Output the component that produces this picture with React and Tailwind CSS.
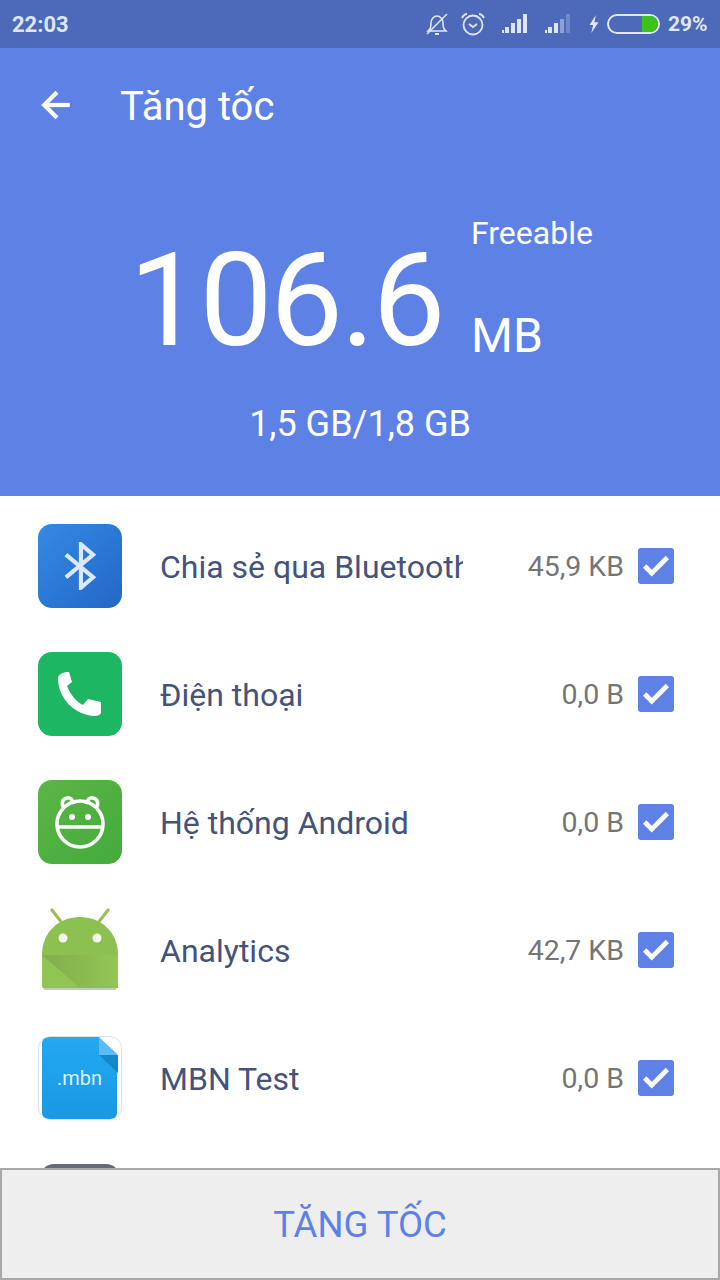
import React from 'react';
import { Check, ArrowLeft } from 'lucide-react';

function SignalIcon({ dim }) {
  const heights = [3, 6, 10, 14, 19];
  return (
    <svg width="30" height="20" viewBox="0 0 30 20">
      {heights.map((h, i) => (
        <rect
          key={i}
          x={i * 6 + (i === 0 ? 3 : 0)}
          y={20 - h}
          width={i === 0 ? 2 : 4}
          height={h}
          fill="#dfe6f7"
          opacity={dim && i >= 3 ? (i === 3 ? 0.45 : 0.25) : 1}
        />
      ))}
    </svg>
  );
}

function StatusBar() {
  return (
    <div className="h-12 bg-[#4d69b9] flex items-center pl-3 pr-3 text-[#dfe6f7] font-bold text-[22px]">
      <span>22:03</span>
      <div className="ml-auto flex items-center">
        <svg width="24" height="26" viewBox="0 0 24 26" fill="none" stroke="#dfe6f7" strokeWidth="1.6">
          <path d="M3 20c2-2 3-3 3-8 0-4 3-7 6-7s6 3 6 7c0 5 1 6 3 8z" />
          <path d="M10 23h4" strokeWidth="2" />
          <path d="M2 23L22 3" />
        </svg>
        <svg className="ml-[11px]" width="26" height="26" viewBox="0 0 26 26" fill="none" stroke="#dfe6f7" strokeWidth="1.8">
          <circle cx="13" cy="14" r="9.5" />
          <path d="M9 13l4 3 4-3" />
          <path d="M2 7c1-2 3-4 5-4M24 7c-1-2-3-4-5-4" strokeWidth="2" />
        </svg>
        <div className="ml-[13px] mt-[-3px]"><SignalIcon /></div>
        <div className="ml-[13px] mt-[-3px]"><SignalIcon dim /></div>
        <svg className="ml-[16px]" width="12" height="18" viewBox="0 0 12 20" fill="#dfe6f7">
          <path d="M8 0L1 11h4l-2 9 8-12H6.500z" />
        </svg>
        <div className="ml-[7px] w-[53px] h-[20px] rounded-full border-2 border-[#dfe6f7] flex justify-end items-center">
          <div className="w-[16px] h-[16px] bg-[#3cc21a] rounded-r-full"></div>
        </div>
        <span className="ml-[8px] mt-[2px] text-[21px] w-[40px] whitespace-nowrap">29%</span>
      </div>
    </div>
  );
}

function Hero() {
  return (
    <div className="h-[448px] bg-[#5e81e6] text-white">
      <div className="flex items-center h-[114px]">
        <ArrowLeft className="ml-[35px]" size={44} strokeWidth={2.300} strokeLinecap="butt" strokeLinejoin="miter" />
        <h1 className="ml-[41px] text-[40px] leading-none mt-[4px]">Tăng tốc</h1>
      </div>
      <div className="flex items-start pl-[129px] mt-[55px]">
        <div className="text-[130px] tracking-[-2.5px] leading-none mt-[19px]">106.6</div>
        <div className="ml-[28px] flex flex-col">
          <span className="text-[32px] leading-none whitespace-nowrap">Freeable</span>
          <span className="text-[48px] leading-none mt-[63px]">MB</span>
        </div>
      </div>
      <div className="text-center text-[36px] leading-none mt-[40px]">1,5 GB/1,8 GB</div>
    </div>
  );
}

function BluetoothIcon() {
  return (
    <div className="w-[84px] h-[84px] rounded-[14px] bg-gradient-to-br from-[#348ae4] to-[#2466c6] flex items-center justify-center">
      <svg width="32" height="48" viewBox="0 0 34 50" fill="none" stroke="#dbe9fa" strokeWidth="4.400">
        <path d="M2 13l29 24-13 11V2l13 11L2 37" />
      </svg>
    </div>
  );
}

function PhoneIcon() {
  return (
    <div className="w-[84px] h-[84px] rounded-[14px] bg-[#1db763] flex items-center justify-center">
      <svg className="mr-[3px]" width="44" height="44" viewBox="0 0 44 44" fill="white">
        <path d="M9 0c-4 1-8 3-8 6 0 20 16 37 37 38 3 0 5-1 6-3V30l-13-3-5 6C20 30 14 24 10 14l5-4L12 0z" />
      </svg>
    </div>
  );
}

function SystemIcon() {
  return (
    <div className="w-[84px] h-[84px] rounded-[14px] bg-gradient-to-br from-[#5cb545] to-[#42ab3c] flex items-center justify-center">
      <svg width="52" height="54" viewBox="0 0 52 54" fill="none" stroke="white" strokeWidth="3.600">
        <circle cx="26" cy="29" r="23" />
        <path d="M3 32h46" />
        <path d="M10 13c-3-4-2-9 3-10 3-1 6 2 7 6M42 13c3-4 2-9-3-10-3-1-6 2-7 6" />
        <circle cx="18" cy="22" r="3" fill="white" stroke="none" />
        <circle cx="34" cy="22" r="3" fill="white" stroke="none" />
      </svg>
    </div>
  );
}

function AndroidIcon() {
  return (
    <div className="w-[84px] h-[84px] flex items-center justify-center">
      <svg width="84" height="84" viewBox="0 0 84 84">
        <defs>
          <linearGradient id="fold" x1="0" y1="0" x2="1" y2="0">
            <stop offset="0" stopColor="#81ad4b" />
            <stop offset="1" stopColor="#93c655" />
          </linearGradient>
        </defs>
        <path d="M24 15L14 2M60 15L70 2" stroke="#9ac05a" strokeWidth="3.200" strokeLinecap="round" />
        <path d="M4 47C4 24 21 9 42 9s38 15 38 38z" fill="#8cc152" />
        <path d="M4 47h76v30a4 4 0 0 1-4 4H8a4 4 0 0 1-4-4z" fill="#90c453" />
        <path d="M4 47h76v33H42z" fill="url(#fold)" />
        <path d="M6 81h72" stroke="#c3cfb2" strokeWidth="2" />
        <circle cx="25" cy="30" r="4.500" fill="#f3f7ea" />
        <circle cx="59" cy="30" r="4.500" fill="#f3f7ea" />
      </svg>
    </div>
  );
}

function MbnIcon() {
  return (
    <div className="relative w-[84px] h-[84px] rounded-[12px] border border-[#d8e4ec] bg-white overflow-hidden">
      <div className="absolute left-[3px] right-[4px] top-0 bottom-0 bg-gradient-to-b from-[#23a8f2] to-[#1a98e2] rounded-[6px] flex items-center justify-center">
        <span className="text-[#dcf1fd] text-[20px] mt-[-1px]">.mbn</span>
      </div>
      <svg className="absolute right-[3px] top-0" width="19" height="18" viewBox="0 0 19 18">
        <path d="M0 0L19 18H0z" fill="#5bbdf8" />
        <path d="M0 0h19v18z" fill="white" />
      </svg>
      <svg className="absolute right-[3px] top-[18px]" width="19" height="18" viewBox="0 0 19 18">
        <path d="M0 0h19v18z" fill="#1787cc" />
      </svg>
    </div>
  );
}

const apps = [
  { name: 'Chia sẻ qua Bluetooth', size: '45,9 KB', Icon: BluetoothIcon },
  { name: 'Điện thoại', size: '0,0 B', Icon: PhoneIcon },
  { name: 'Hệ thống Android', size: '0,0 B', Icon: SystemIcon },
  { name: 'Analytics', size: '42,7 KB', Icon: AndroidIcon },
  { name: 'MBN Test', size: '0,0 B', Icon: MbnIcon },
];

function AppRow({ name, size, Icon }) {
  return (
    <div className="flex items-center h-[84px]">
      <Icon />
      <div className="ml-[38px] w-[303px] overflow-hidden whitespace-nowrap text-[32px] pt-[2px] text-[#44527c]">{name}</div>
      <div className="ml-auto text-[28.500px] pt-[2px] text-[#757575]">{size}</div>
      <div className="ml-[14px] w-[36px] h-[36px] rounded-[3px] bg-[#5e81e6] flex items-center justify-center">
        <Check size={34} color="white" strokeWidth={3.400} strokeLinecap="butt" strokeLinejoin="miter" />
      </div>
    </div>
  );
}

export default function App() {
  return (
    <div className="relative w-[720px] h-[1280px] overflow-hidden bg-white font-['Roboto',sans-serif]">
      <StatusBar />
      <Hero />
      <div className="flex flex-col gap-[44px] pt-[28px] pl-[38px] pr-[46px]">
        {apps.map((app) => (
          <AppRow key={app.name} {...app} />
        ))}
        <div className="ml-[2px] w-[80px] h-[84px] rounded-[14px] bg-[#666b7c]"></div>
      </div>
      <button className="absolute left-0 bottom-0 w-[720px] h-[112px] bg-[#eeeeee] border-2 border-[#a8a8a8] pt-[2px] text-[36.500px] text-[#5e81e6]">
        TĂNG TỐC
      </button>
    </div>
  );
}
